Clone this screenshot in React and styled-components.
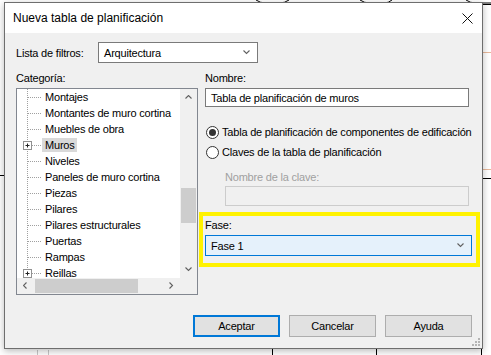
import React from "react";
import styled, { createGlobalStyle } from "styled-components";

const GlobalStyle = createGlobalStyle`
  html, body {
    margin: 0;
    padding: 0;
    background: #fff;
  }
  body {
    font-family: "Liberation Sans", Arial, sans-serif;
    font-size: 11px;
    letter-spacing: -0.2px;
    color: #000;
  }
  * { box-sizing: border-box; }
`;

const categories = [
  { name: "Montajes" },
  { name: "Montantes de muro cortina" },
  { name: "Muebles de obra" },
  { name: "Muros", expandable: true, selected: true },
  { name: "Niveles" },
  { name: "Paneles de muro cortina" },
  { name: "Piezas" },
  { name: "Pilares" },
  { name: "Pilares estructurales" },
  { name: "Puertas" },
  { name: "Rampas" },
  { name: "Reillas", expandable: true },
];

const Chevron = ({ dir = "down" }) => {
  const pts = {
    down: "0.5,0.5 3.5,3.5 6.5,0.5",
    up: "0.5,3.5 3.5,0.5 6.5,3.5",
    left: "3.5,0.5 0.5,3.5 3.5,6.5",
    right: "0.5,0.5 3.5,3.5 0.5,6.5",
  }[dir];
  const horiz = dir === "left" || dir === "right";
  return (
    <svg width={horiz ? 5 : 8} height={horiz ? 8 : 5} viewBox={horiz ? "0 0 5 8" : "0 0 8 5"}>
      <polyline points={pts} fill="none" stroke="#606060" strokeWidth="1.1" />
    </svg>
  );
};

const TreeGuide = ({ expandable }) => (
  <svg width="25" height="16" viewBox="0 0 25 16">
    <line x1="10.5" y1="0" x2="10.5" y2="16" stroke="#a0a0a0" strokeDasharray="1 1" />
    <line x1="11" y1="8.5" x2="25" y2="8.5" stroke="#a0a0a0" strokeDasharray="1 1" />
    {expandable && (
      <g>
        <rect x="6.5" y="4.5" width="8" height="8" fill="#fff" stroke="#919191" />
        <line x1="8.5" y1="8.5" x2="12.5" y2="8.5" stroke="#222" />
        <line x1="10.5" y1="6.5" x2="10.5" y2="10.5" stroke="#222" />
      </g>
    )}
  </svg>
);

const App = () => {
  return (
    <>
      <GlobalStyle />
      <Page>
        <Drawing width="491" height="355" viewBox="0 0 491 355">
          <g fill="none" stroke="#000" strokeWidth="1">
            <path d="M256 0 Q260 3 266 3 L279 3 Q285 3 289 0" />
            <path d="M360 0 Q364 3 370 3 L383 3 Q389 3 392 0" />
            <path d="M466 0 Q470 3 476 3 L491 3" />
            <line x1="483" y1="4.5" x2="491" y2="4.5" />
            <line x1="483" y1="178.5" x2="491" y2="178.5" />
            <line x1="0" y1="175.5" x2="4" y2="175.5" />
            <line x1="272.5" y1="349" x2="272.5" y2="355" />
            <line x1="376.5" y1="349" x2="376.5" y2="355" />
            <line x1="481.5" y1="349" x2="481.5" y2="355" />
          </g>
          <g fill="none" stroke="#e8b89a" strokeWidth="1">
            <line x1="483" y1="52.5" x2="491" y2="52.5" />
            <line x1="483" y1="169.5" x2="491" y2="169.5" />
          </g>
          <g stroke="#c8c8c8" strokeWidth="1">
            <line x1="37.5" y1="350" x2="37.5" y2="355" />
            <line x1="48.5" y1="350" x2="48.5" y2="355" />
          </g>
        </Drawing>

        <Dialog>
          <TitleBar>
            <Title>Nueva tabla de planificación</Title>
            <svg width="11" height="11" viewBox="0 0 11 11">
              <path d="M0.5 0.5 L10.5 10.5 M10.5 0.5 L0.5 10.5" stroke="#111" strokeWidth="1" />
            </svg>
          </TitleBar>

          <Body>
            <FilterRow>
              <FilterLabel>Lista de filtros:</FilterLabel>
              <Select $width="160px">
                <span>Arquitectura</span>
                <Chevron />
              </Select>
            </FilterRow>

            <Columns>
              <LeftCol>
                <SectionLabel>Categoría:</SectionLabel>
                <TreeBox>
                  <TreeViewport>
                    {categories.map((c) => (
                      <TreeRow key={c.name}>
                        <TreeGuide expandable={c.expandable} />
                        <TreeText $selected={c.selected}>{c.name}</TreeText>
                      </TreeRow>
                    ))}
                  </TreeViewport>
                  <VScroll>
                    <ArrowCell><Chevron dir="up" /></ArrowCell>
                    <VTrack>
                      <VThumb />
                    </VTrack>
                    <ArrowCell><Chevron dir="down" /></ArrowCell>
                  </VScroll>
                  <HScroll>
                    <ArrowCell $h><Chevron dir="left" /></ArrowCell>
                    <HThumb />
                    <HTrack />
                    <ArrowCell $h><Chevron dir="right" /></ArrowCell>
                  </HScroll>
                  <Corner />
                </TreeBox>
              </LeftCol>

              <RightCol>
                <SectionLabel>Nombre:</SectionLabel>
                <TextBox>Tabla de planificación de muros</TextBox>

                <RadioGroup>
                  <RadioRow>
                    <RadioCircle>
                      <RadioDot />
                    </RadioCircle>
                    Tabla de planificación de componentes de edificación
                  </RadioRow>
                  <RadioRow>
                    <RadioCircle />
                    Claves de la tabla de planificación
                  </RadioRow>
                </RadioGroup>

                <SubLabel>Nombre de la clave:</SubLabel>
                <DisabledBox />

                <Highlight>
                  <SectionLabel>Fase:</SectionLabel>
                  <Select $active $width="100%">
                    <span>Fase 1</span>
                    <Chevron />
                  </Select>
                </Highlight>
              </RightCol>
            </Columns>

            <ButtonRow>
              <Button $primary>Aceptar</Button>
              <Button>Cancelar</Button>
              <Button>Ayuda</Button>
            </ButtonRow>

            <SizeGrip width="9" height="9" viewBox="0 0 9 9">
              <g fill="#b4b4b4">
                <rect x="6" y="0" width="2" height="2" />
                <rect x="3" y="3" width="2" height="2" />
                <rect x="6" y="3" width="2" height="2" />
                <rect x="0" y="6" width="2" height="2" />
                <rect x="3" y="6" width="2" height="2" />
                <rect x="6" y="6" width="2" height="2" />
              </g>
            </SizeGrip>
          </Body>
        </Dialog>
      </Page>
    </>
  );
};

export default App;

const Page = styled.div`
  position: relative;
  width: 491px;
  height: 355px;
  overflow: hidden;
  padding: 2px 0 0 4px;
  background: #fff;
`;

const Drawing = styled.svg`
  position: absolute;
  left: 0;
  top: 0;
  pointer-events: none;
`;

const Dialog = styled.div`
  position: relative;
  width: 479px;
  height: 347px;
  border: 1px solid #6e6e6e;
  box-shadow: 0 2px 7px rgba(0, 0, 0, 0.28);
  background: #f0f0f0;
  display: flex;
  flex-direction: column;
`;

const TitleBar = styled.div`
  height: 30px;
  flex: none;
  background: #fff;
  display: flex;
  align-items: center;
  justify-content: space-between;
  padding: 0 9px 0 8px;
`;

const Title = styled.span`
  font-size: 12px;
  letter-spacing: 0;
`;

const Body = styled.div`
  position: relative;
  flex: 1;
  display: flex;
  flex-direction: column;
  padding: 9px 10px 11px 11px;
`;

const FilterRow = styled.div`
  display: flex;
  align-items: center;
  height: 21px;
`;

const FilterLabel = styled.span`
  width: 82px;
`;

const Select = styled.div`
  width: ${(p) => p.$width};
  height: 21px;
  border: 1px solid ${(p) => (p.$active ? "#0078d7" : "#7a7a7a")};
  background: ${(p) => (p.$active ? "#e5f1fb" : "#fff")};
  display: flex;
  align-items: center;
  justify-content: space-between;
  padding: 0 6px 0 5px;
`;

const Columns = styled.div`
  display: flex;
  gap: 7px;
  margin-top: 8px;
`;

const LeftCol = styled.div`
  width: 182px;
  display: flex;
  flex-direction: column;
`;

const RightCol = styled.div`
  flex: 1;
  display: flex;
  flex-direction: column;
`;

const SectionLabel = styled.div`
  line-height: 15px;
  height: 15px;
  margin-bottom: 2px;
`;

const TreeBox = styled.div`
  height: 207px;
  border: 1px solid #828790;
  background: #fff;
  display: grid;
  grid-template-columns: 1fr 17px;
  grid-template-rows: 1fr 16px;
`;

const TreeViewport = styled.div`
  overflow: hidden;
`;

const TreeRow = styled.div`
  display: flex;
  align-items: center;
  height: 16px;
`;

const TreeText = styled.span`
  padding: 0 2px 0 3px;
  line-height: 14px;
  white-space: nowrap;
  background: ${(p) => (p.$selected ? "#d9d9d9" : "transparent")};
`;

const VScroll = styled.div`
  background: #f0f0f0;
  display: flex;
  flex-direction: column;
`;

const ArrowCell = styled.div`
  flex: none;
  ${(p) => (p.$h ? "width: 17px;" : "height: 17px;")}
  display: flex;
  align-items: center;
  justify-content: center;
`;

const VTrack = styled.div`
  flex: 1;
  padding-top: 82px;
`;

const VThumb = styled.div`
  height: 35px;
  margin: 0 1px;
  background: #cdcdcd;
`;

const HScroll = styled.div`
  background: #f0f0f0;
  display: flex;
`;

const HThumb = styled.div`
  width: 103px;
  margin: 1px 0 1px 1px;
  background: #cdcdcd;
`;

const HTrack = styled.div`
  flex: 1;
`;

const Corner = styled.div`
  background: #f0f0f0;
`;

const TextBox = styled.div`
  width: 264px;
  height: 19px;
  border: 1px solid #7a7a7a;
  background: #fff;
  display: flex;
  align-items: center;
  padding-left: 5px;
`;

const RadioGroup = styled.div`
  margin-top: 15px;
  display: flex;
  flex-direction: column;
`;

const RadioRow = styled.div`
  height: 20px;
  display: flex;
  align-items: center;
  gap: 3px;
  white-space: nowrap;
`;

const RadioCircle = styled.span`
  width: 13px;
  height: 13px;
  margin-left: 1px;
  border: 1px solid #333;
  border-radius: 50%;
  background: #fff;
  display: flex;
  align-items: center;
  justify-content: center;
`;

const RadioDot = styled.span`
  width: 7px;
  height: 7px;
  border-radius: 50%;
  background: #333;
`;

const SubLabel = styled.div`
  margin: 8px 0 0 20px;
  line-height: 15px;
  color: #a0a0a0;
`;

const DisabledBox = styled.div`
  margin: 1px 0 0 20px;
  width: 244px;
  height: 20px;
  border: 1px solid #cccccc;
  background: #f0f0f0;
`;

const Highlight = styled.div`
  margin: 6px -8px 0 -6px;
  border: 4px solid #fff200;
  padding: 2px 4px 7px 2px;
`;

const ButtonRow = styled.div`
  margin-top: auto;
  display: flex;
  justify-content: flex-end;
  gap: 9px;
`;

const Button = styled.button`
  width: 87px;
  height: 22px;
  padding: 0;
  font: inherit;
  letter-spacing: inherit;
  color: #000;
  background: #e1e1e1;
  border: ${(p) => (p.$primary ? "2px solid #0078d7" : "1px solid #adadad")};
`;

const SizeGrip = styled.svg`
  position: absolute;
  right: 1px;
  bottom: 1px;
`;
